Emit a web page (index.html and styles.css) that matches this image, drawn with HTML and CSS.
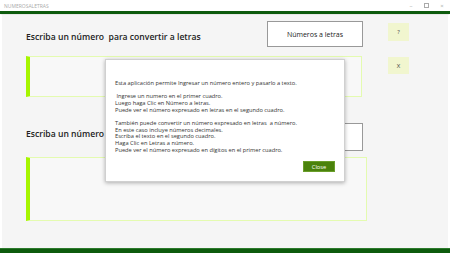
FILE: index.html
```html
<!DOCTYPE html>
<html lang="es">
<head>
    <meta charset="UTF-8">
    <title>NUMEROSALETRAS</title>
    <link rel="stylesheet" href="styles.css">
</head>
<body>
<div class="window">
    <!-- barra de título -->
    <div class="titlebar">
        <span class="app-name">NUMEROSALETRAS</span>
        <div class="controls">
            <span class="ctl">&#8211;</span>
            <span class="ctl restore"></span>
            <span class="ctl">&#215;</span>
        </div>
    </div>
    <div class="accent"></div>

    <div class="main">
        <div class="head-row">
            <h2 class="title-one">Escriba un número &nbsp;para convertir a letras</h2>
            <button class="convert-button">Números a letras</button>
        </div>
        <button class="small-button btn-help">?</button>

        <div class="textbox box-one"></div>
        <button class="small-button btn-clear">X</button>

        <div class="head-row row-two">
            <h2 class="title-two">Escriba un número</h2>
            <button class="convert-button">Letras a número</button>
        </div>
        <div></div>

        <div class="textbox box-two"></div>
    </div>

    <div class="bottom-bar"></div>

    <!-- diálogo de ayuda -->
    <div class="dialog">
        <p>Esta aplicación permite Ingresar un número entero y pasarlo a texto.</p>
        <p>&nbsp;Ingrese un numero en el primer cuadro.<br>
            Luego haga Clic en Número a letras.<br>
            Puede ver el número expresado en letras en el segundo cuadro.</p>
        <p>También puede convertir un número expresado en letras &nbsp;a número.<br>
            En este caso incluye números decimales.<br>
            Escriba el texto en el segundo cuadro.<br>
            Haga Clic en Letras a número.<br>
            Puede ver el número expresado en dígitos en el primer cuadro.</p>
        <div class="dialog-actions">
            <button class="close-button">Close</button>
        </div>
    </div>
</div>
</body>
</html>
```

FILE: styles.css
```css
/* página completa */
body {
    margin: 0;
    overflow: hidden;
    font-family: "Open Sans", "Noto Sans", sans-serif;
}

.window {
    position: relative;
    width: 450px;
    height: 253px;
    display: flex;
    flex-direction: column;
    background-color: #fff;
}

/* barra de título */
.titlebar {
    height: 11px;
    display: flex;
    align-items: center;
    justify-content: space-between;
    padding: 0 5px 0 4px;
    color: #aaa;
    font-size: 5px;
}

.controls {
    display: flex;
    align-items: center;
    gap: 10px;
}

.ctl {
    width: 6px;
    text-align: center;
    font-size: 6px;
}

.restore {
    width: 3px;
    height: 3px;
    border: 1px solid #aaa;
}

.accent {
    height: 3px;
    background-color: #0d5b0d;
}

/* contenido principal */
.main {
    flex: 1;
    background-color: #f5f5f5;
    border-left: 2px solid #fff;
    border-right: 2px solid #fff;
    border-top: 1px solid #e8e8e8;
    padding: 6px 0 0 24px;
    display: grid;
    grid-template-columns: 341px 21px;
    column-gap: 21px;
    align-content: start;
    align-items: start;
}

.head-row {
    height: 26px;
    display: flex;
    align-items: center;
    justify-content: space-between;
    padding-right: 4px;
}

.row-two {
    margin-top: 26px;
    height: 28px;
}

h2 {
    margin: 0;
    font-size: 8.6px;
    font-weight: 600;
    color: #222;
    white-space: nowrap;
}

.title-one {
    margin-top: 6px;
}

.title-two {
    margin-bottom: 6px;
}

.convert-button {
    width: 96px;
    height: 100%;
    background-color: #fff;
    border: 1px solid #999;
    font-family: inherit;
    font-size: 7px;
    color: #222;
    padding: 0;
}

.small-button {
    width: 21px;
    border: none;
    background-color: #f1f6cf;
    font-family: inherit;
    font-size: 6px;
    color: #444;
    padding: 0;
}

.btn-help {
    height: 18px;
    margin-top: 2px;
}

.btn-clear {
    height: 17px;
    margin-top: 10px;
}

/* cuadros de texto */
.textbox {
    background-color: #f8f8f8;
    border: 1px solid #e4fbb0;
    border-left: 4px solid #a6f500;
}

.box-one {
    margin-top: 9px;
    width: 331px;
    height: 39px;
}

.box-two {
    margin-top: 6px;
    width: 336px;
    height: 62px;
}

.bottom-bar {
    height: 5px;
    background-color: #0d5b0d;
    border-top: 1px solid #2c7a2c;
    box-sizing: border-box;
}

/* diálogo */
.dialog {
    position: absolute;
    left: 105px;
    top: 59px;
    width: 240px;
    height: 123px;
    box-sizing: border-box;
    padding: 20px 9px 0 9px;
    background-color: #fff;
    border: 1px solid #d0d0d0;
    box-shadow: 0 1px 4px rgba(0, 0, 0, 0.3);
    font-size: 5.7px;
    line-height: 6.67px;
    color: #333;
}

.dialog p {
    margin: 0 0 6.67px 0;
}

.dialog-actions {
    display: flex;
    justify-content: flex-end;
    margin-top: 8px;
}

.close-button {
    width: 32px;
    height: 11px;
    padding: 0;
    background-color: #4a820c;
    border: 1px solid #6a9e2a;
    color: #fff;
    font-family: inherit;
    font-size: 5.7px;
}
```
